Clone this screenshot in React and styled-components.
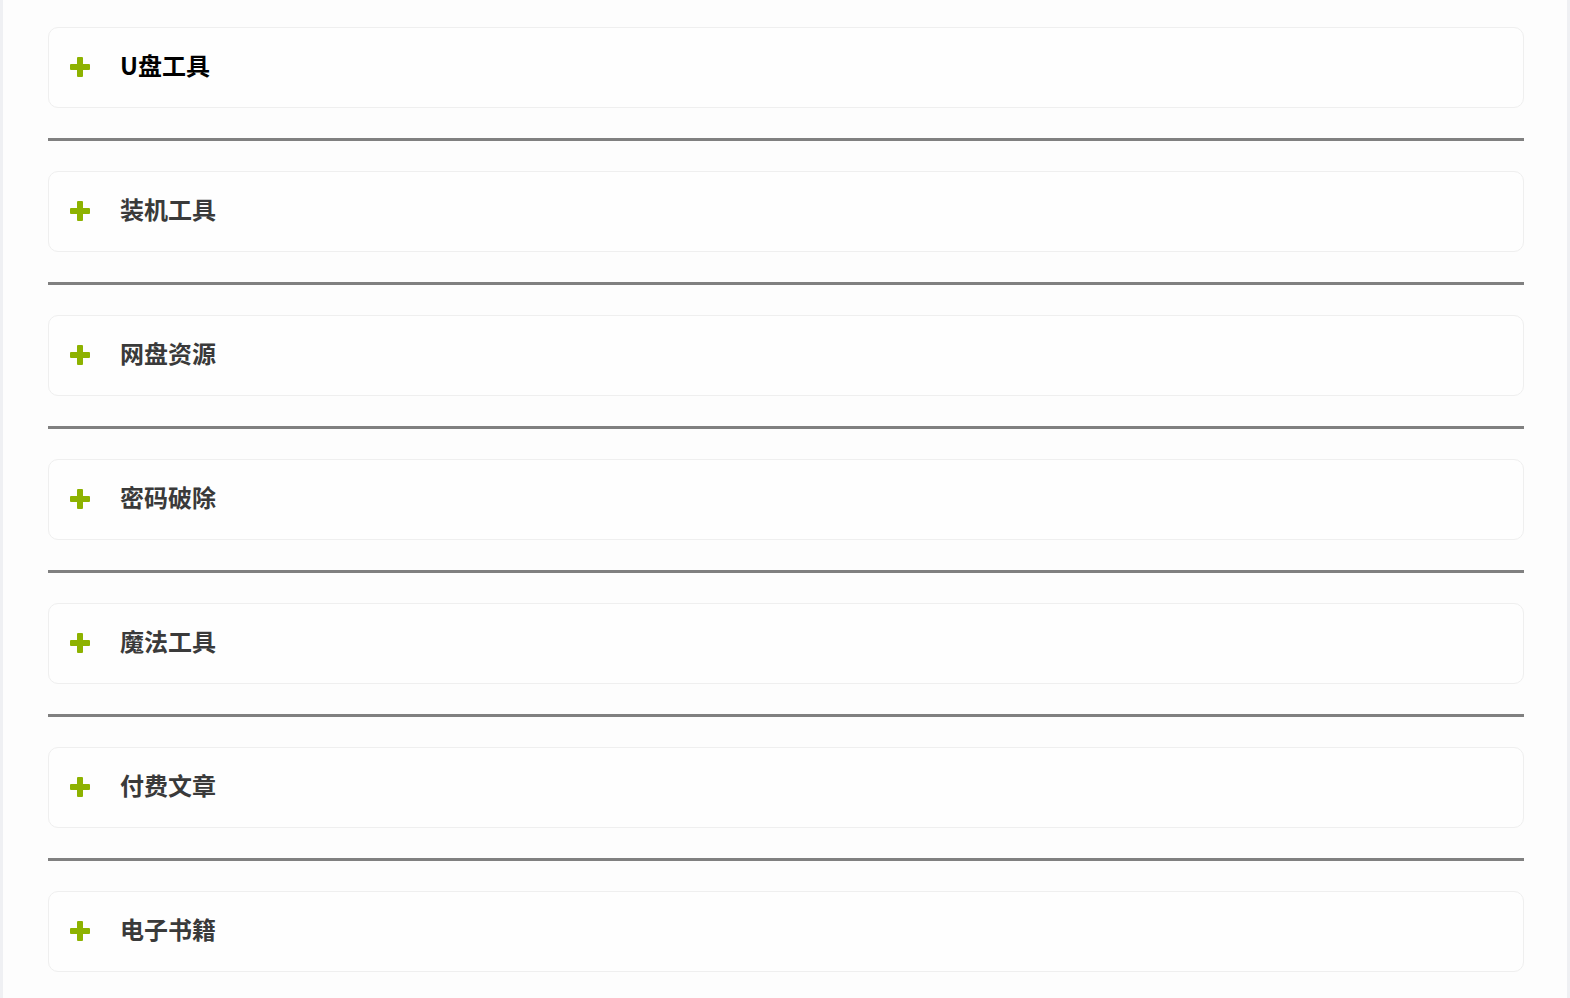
import React from "react"
import styled, { createGlobalStyle } from "styled-components"

const CATEGORIES = [
  { title: "U盘工具", active: true },
  { title: "装机工具" },
  { title: "网盘资源" },
  { title: "密码破除" },
  { title: "魔法工具" },
  { title: "付费文章" },
  { title: "电子书籍" },
]

const GlobalStyle = createGlobalStyle`
  html, body {
    margin: 0;
    padding: 0;
    background: #eff0f3;
  }
  body {
    font-family: "Noto Sans CJK SC", "Noto Sans", sans-serif;
  }
`

const Page = styled.div`
  margin: 0 3px;
  min-height: 998px;
  box-sizing: border-box;
  background: #fdfdfd;
  padding: 27px 43px 20px 45px;
`

const List = styled.div`
  display: flex;
  flex-direction: column;
`

const Card = styled.div`
  height: 81px;
  box-sizing: border-box;
  border: 1px solid #efefef;
  border-radius: 10px;
  background: #fefefe;
  display: flex;
  align-items: center;
  padding-left: 21px;
  gap: 30px;
`

const Plus = styled.span`
  position: relative;
  width: 20px;
  height: 20px;
  flex: none;
  margin-top: -2px;
  &::before,
  &::after {
    content: "";
    position: absolute;
    background: #8db200;
    border-radius: 1px;
  }
  &::before {
    left: 0;
    right: 0;
    top: 7px;
    height: 6px;
  }
  &::after {
    top: 0;
    bottom: 0;
    left: 7px;
    width: 6px;
  }
`

const Title = styled.h3`
  margin: -5px 0 0;
  font-size: 24px;
  font-weight: 700;
  line-height: 1;
  color: ${(p) => (p.active ? "#000" : "#3a3a3a")};
`

const Rule = styled.hr`
  margin: 30px 0;
  border: none;
  height: 3px;
  background: #808080;
`

export default function App() {
  return (
    <>
      <GlobalStyle />
      <Page>
        <List>
          {CATEGORIES.map((c, i) => (
            <React.Fragment key={c.title}>
              {i > 0 && <Rule />}
              <Card>
                <Plus />
                <Title active={c.active}>{c.title}</Title>
              </Card>
            </React.Fragment>
          ))}
        </List>
      </Page>
    </>
  )
}
